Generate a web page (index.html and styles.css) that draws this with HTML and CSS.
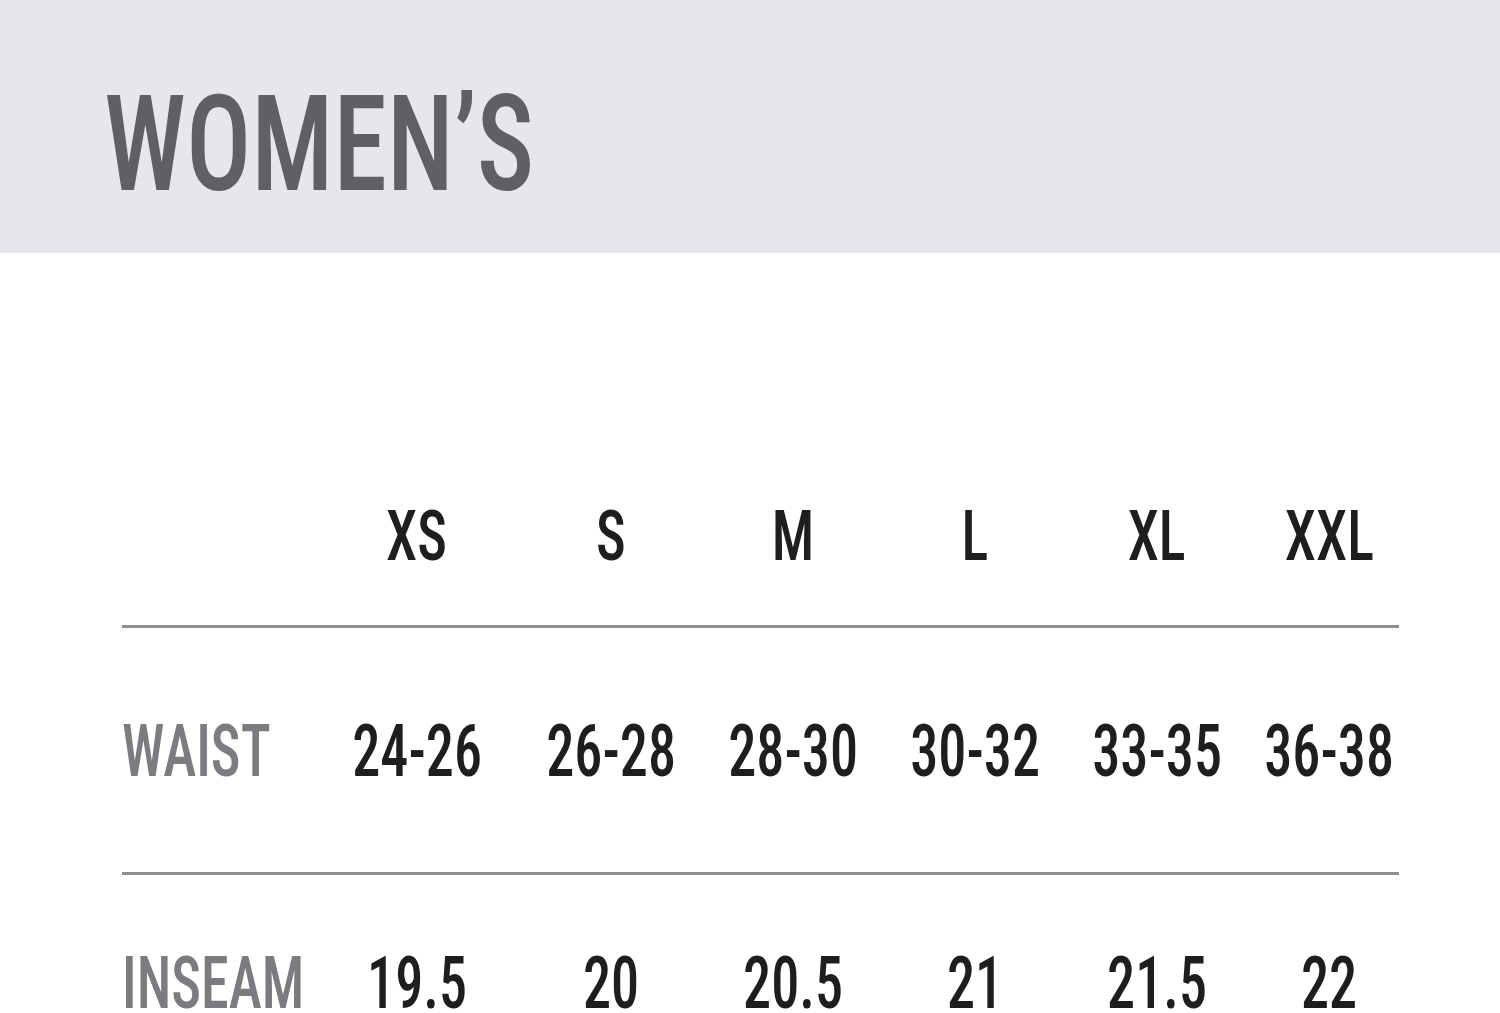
FILE: index.html
```html
<!DOCTYPE html>
<html>
<head>
<meta charset="utf-8">
<link rel="stylesheet" href="styles.css">
</head>
<body>
<header class="band">
  <h1 class="title"><span class="sq">WOMEN’S</span></h1>
</header>
<main class="chart">
  <div class="row head">
    <div class="cell label"></div>
    <div class="cell"><span class="sq">XS</span></div>
    <div class="cell"><span class="sq">S</span></div>
    <div class="cell"><span class="sq">M</span></div>
    <div class="cell"><span class="sq">L</span></div>
    <div class="cell"><span class="sq">XL</span></div>
    <div class="cell"><span class="sq">XXL</span></div>
  </div>
  <div class="rule rule-1"></div>
  <div class="row waist">
    <div class="cell label"><span class="sq">WAIST</span></div>
    <div class="cell num"><span class="sq">24-26</span></div>
    <div class="cell num"><span class="sq">26-28</span></div>
    <div class="cell num"><span class="sq">28-30</span></div>
    <div class="cell num"><span class="sq">30-32</span></div>
    <div class="cell num"><span class="sq">33-35</span></div>
    <div class="cell num"><span class="sq">36-38</span></div>
  </div>
  <div class="rule rule-2"></div>
  <div class="row inseam">
    <div class="cell label"><span class="sq">INSEAM</span></div>
    <div class="cell num"><span class="sq">19.5</span></div>
    <div class="cell num"><span class="sq">20</span></div>
    <div class="cell num"><span class="sq">20.5</span></div>
    <div class="cell num"><span class="sq">21</span></div>
    <div class="cell num"><span class="sq">21.5</span></div>
    <div class="cell num"><span class="sq">22</span></div>
  </div>
</main>
</body>
</html>
```

FILE: styles.css
```css
html, body {
  margin: 0;
  padding: 0;
  background: #ffffff;
  overflow: hidden;
}
body {
  width: 1500px;
  height: 1013px;
  font-family: "Roboto Condensed", "Liberation Sans Narrow", sans-serif;
}
.sq {
  display: inline-block;
  white-space: nowrap;
  transform-origin: center center;
  transform: scaleX(0.79);
}
.band {
  background: #e6e7ea;
  height: 253px;
  box-sizing: border-box;
  padding: 78px 0 0 104px;
}
.title {
  margin: 0;
  font-weight: 500;
  font-size: 134px;
  line-height: 134px;
  color: #5f6063;
}
.title .sq {
  transform-origin: left center;
  transform: scaleX(0.81);
}
.chart {
  padding: 0 0 0 122px;
}
.row {
  display: grid;
  grid-template-columns: 198px 194px 194px 170px 194px 170px 174px;
  font-size: 72px;
  line-height: 72px;
  font-weight: 500;
  color: #1e1e1f;
}
.cell {
  text-align: center;
}
.cell.num .sq {
  transform: scaleX(0.78);
}
.cell.label {
  text-align: left;
  color: #7b7c7f;
}
.cell.label .sq {
  transform-origin: left center;
  transform: scaleX(0.78);
}
.head {
  margin-top: 247px;
  font-size: 71px;
  line-height: 71px;
}
.rule {
  width: 1277px;
  height: 3px;
  background: #8f9093;
}
.rule-1 {
  margin-top: 54px;
}
.waist {
  margin-top: 88px;
}
.rule-2 {
  margin-top: 84px;
}
.inseam {
  margin-top: 73px;
}
```
